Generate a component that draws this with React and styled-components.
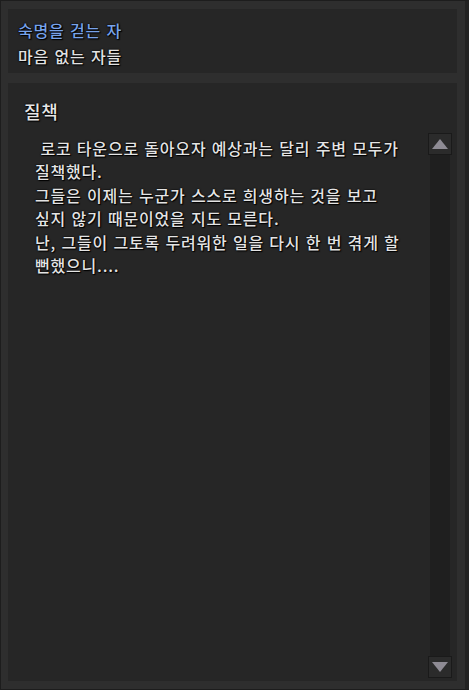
import React from 'react'
import styled, { createGlobalStyle } from 'styled-components'

const GlobalStyle = createGlobalStyle`
  html, body {
    margin: 0;
    padding: 0;
    background-color: #2d2d2d;
  }
  * {
    box-sizing: border-box;
  }
`

const Window = styled.div`
  width: 469px;
  height: 690px;
  display: flex;
  flex-direction: column;
  gap: 10px;
  padding: 8px 8px 8px 7px;
  background-color: #2e2e2e;
  border: 1px solid #1d1d1d;
  border-right: 4px solid #222222;
  font-family: 'Noto Sans CJK KR', 'Noto Sans', sans-serif;
  font-weight: 500;
  letter-spacing: 0.8px;
  word-spacing: 1px;
  text-shadow: 0 0 2px #000000, 0 0 1px #000000, 1px 1px 1px #000000;
`

const HeaderPanel = styled.div`
  height: 64px;
  padding: 8px 10px 4px;
  background-color: #262626;
`

const HeaderLine = styled.div`
  height: 26px;
  line-height: 26px;
  font-size: 16px;
  color: ${props => (props.accent ? '#78a3ea' : '#e2e2e2')};
`

const BodyPanel = styled.div`
  flex: 1;
  display: flex;
  flex-direction: column;
  padding: 16px 5px 3px 16px;
  background-color: #262626;
`

const Title = styled.div`
  height: 24px;
  line-height: 24px;
  font-size: 18px;
  color: #e6e6e6;
`

const Content = styled.div`
  flex: 1;
  display: flex;
  margin-top: 10px;
`

const Text = styled.div`
  flex: 1;
  padding: 4px 0 0 11px;
  font-size: 16px;
  line-height: 23.4px;
  color: #e4e4e4;
  white-space: pre;
`

const Scrollbar = styled.div`
  width: 24px;
  display: flex;
  flex-direction: column;
`

const Track = styled.div`
  flex: 1;
  margin: 0 2px;
  background-color: #1f1f1f;
`

const ArrowButton = styled.div`
  height: 22px;
  display: flex;
  align-items: center;
  justify-content: center;
  background-color: #2b2b2b;
  border: 1px solid #1a1a1a;
`

const Arrow = ({ down }) => (
  <svg width="16" height="10" viewBox="0 0 16 10">
    <polygon
      points={down ? '0,0 16,0 8,10' : '8,0 16,10 0,10'}
      fill="#8e8b94"
    />
  </svg>
)

const lines = [
  ' 로코 타운으로 돌아오자 예상과는 달리 주변 모두가',
  '질책했다.',
  '그들은 이제는 누군가 스스로 희생하는 것을 보고',
  '싶지 않기 때문이었을 지도 모른다.',
  '난, 그들이 그토록 두려워한 일을 다시 한 번 겪게 할',
  '뻔했으니....',
]

const App = () => (
  <>
    <GlobalStyle />
    <Window>
      <HeaderPanel>
        <HeaderLine accent>숙명을 걷는 자</HeaderLine>
        <HeaderLine>마음 없는 자들</HeaderLine>
      </HeaderPanel>
      <BodyPanel>
        <Title>질책</Title>
        <Content>
          <Text>{lines.join('\n')}</Text>
          <Scrollbar>
            <ArrowButton>
              <Arrow />
            </ArrowButton>
            <Track />
            <ArrowButton>
              <Arrow down />
            </ArrowButton>
          </Scrollbar>
        </Content>
      </BodyPanel>
    </Window>
  </>
)

export default App
